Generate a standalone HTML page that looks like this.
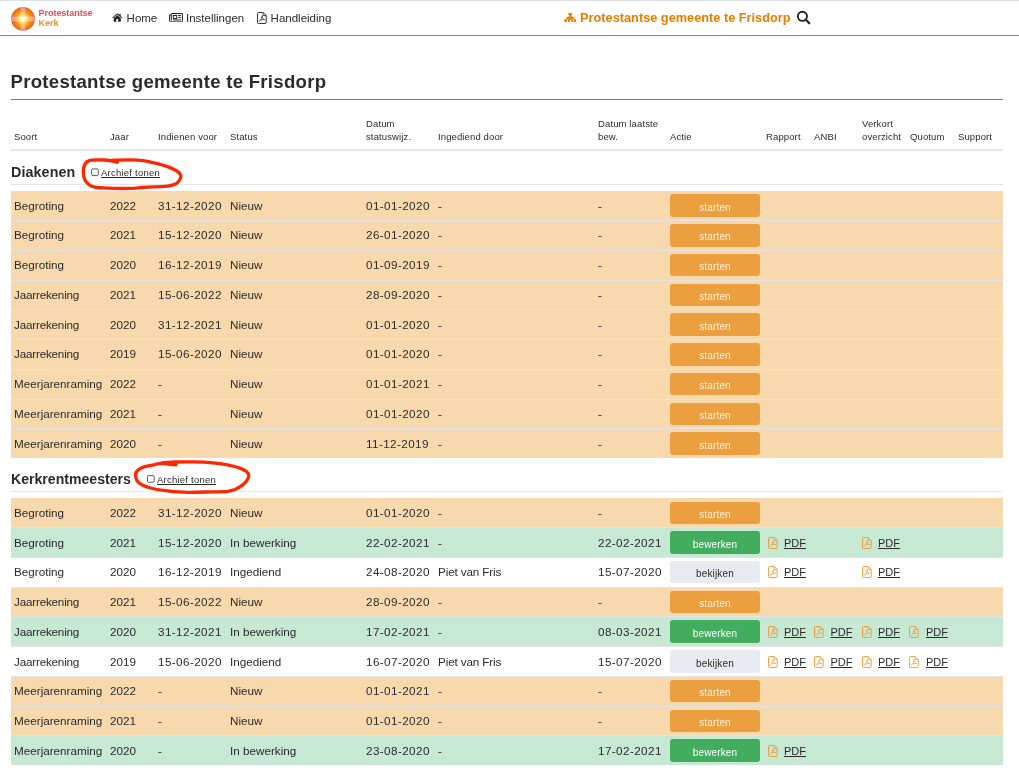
<!DOCTYPE html>
<html lang="nl">
<head>
<meta charset="utf-8">
<title>Protestantse gemeente te Frisdorp</title>
<style>
html,body{margin:0;padding:0;background:#fff;}
body{width:1019px;height:780px;overflow:hidden;position:relative;font-family:"Liberation Sans",sans-serif;color:#2b2b2b;font-size:11.7px;}
*{box-sizing:border-box;}
#wrap{position:absolute;left:0;top:0;width:1019px;height:780px;will-change:transform;}
.abs{position:absolute;}
#topline{left:0;top:0;width:1019px;height:1px;background:#dcdfe6;}
#navline{left:0;top:34.5px;width:1019px;height:1px;background:#8a8a8a;}
.nav{top:11px;height:14px;line-height:14px;font-size:11.5px;color:#2b2b2b;white-space:nowrap;}
.nav svg{position:absolute;}
#logotxt{left:39px;top:9px;transform:translate(-0.4px,-0.6px);font-weight:700;font-size:9.1px;line-height:10px;letter-spacing:-0.1px;}
#logotxt b{display:block;color:#e0505c;}
#logotxt b+b{color:#f0922c;}
#org{left:580.1px;top:10px;height:16px;line-height:16px;font-size:12.75px;font-weight:700;color:#e67e00;white-space:nowrap;}
h1{position:absolute;left:10.5px;top:70.3px;margin:0;font-size:18.6px;line-height:24px;font-weight:700;color:#2b2b2b;white-space:nowrap;letter-spacing:0.27px;}
#h1line{left:11px;top:98.5px;width:992px;height:1px;background:#7a7a7a;}
.th{font-size:9.5px;line-height:13px;color:#2b2b2b;white-space:nowrap;letter-spacing:.12px;}
#thline{left:11px;top:149.2px;width:992px;height:1.7px;background:#e3e6ec;}
.sec{left:11px;font-size:14.3px;font-weight:700;line-height:18px;white-space:nowrap;color:#2b2b2b;}
.secline{left:11px;width:992px;height:1px;background:#e3e6ec;}
.cb{width:7.5px;height:7.5px;border:1px solid #555;border-radius:2px;background:#fff;}
.arch{font-size:9.5px;letter-spacing:.23px;line-height:12px;text-decoration:underline;color:#2b2b2b;white-space:nowrap;}
.row{position:absolute;left:11px;width:992px;}
.ro{background:#f8d9ae;}
.rg{background:#c7e8d2;}
.rw{background:#ffffff;}
.sep{position:absolute;left:0;top:-0.5px;width:100%;height:1px;background:#e5e4e9;}
.c{position:absolute;height:14px;line-height:14px;white-space:nowrap;font-size:11.7px;}
.btn{position:absolute;left:659px;top:3px;width:90px;height:23px;border-radius:3px;font-size:10px;letter-spacing:.15px;text-align:center;}
.btn span{position:absolute;left:0;width:100%;height:14px;line-height:14px;}
.bo{background:#eb9f3f;color:#fdf0dc;}
.bg{background:#42ad5f;color:#fff;}
.bk{background:#e8ebef;color:#2b2b2b;}
.pdf{position:absolute;height:14px;line-height:14px;white-space:nowrap;font-size:11px;color:#ee9a36;}
.pdf .pi{position:absolute;left:0.5px;top:0.9px;}
.pdf u{position:absolute;left:17px;color:#2b2b2b;text-decoration:underline;}
</style>
</head>
<body>
<div id="wrap">
<div id="topline" class="abs"></div>

<!-- logo -->
<svg class="abs" style="left:10px;top:6px" width="26" height="26" viewBox="0 0 26 26">
  <defs>
    <radialGradient id="lg" cx="50%" cy="50%" r="50%">
      <stop offset="0" stop-color="#fff8cc"/>
      <stop offset="0.2" stop-color="#fee067"/>
      <stop offset="0.42" stop-color="#f9b81c"/>
      <stop offset="0.7" stop-color="#ef8d14"/>
      <stop offset="0.9" stop-color="#e8741a"/>
      <stop offset="1" stop-color="#e2602c"/>
    </radialGradient>
    <linearGradient id="ch" x1="0" x2="1" y1="0" y2="0">
      <stop offset="0" stop-color="#eb9bb4"/><stop offset="0.3" stop-color="#fad0a4"/><stop offset="0.5" stop-color="#fff6c4"/><stop offset="0.7" stop-color="#fad0a4"/><stop offset="1" stop-color="#eb9bb4"/>
    </linearGradient>
    <linearGradient id="cv" x1="0" x2="0" y1="0" y2="1">
      <stop offset="0" stop-color="#eb9bb4"/><stop offset="0.3" stop-color="#fad0a4"/><stop offset="0.5" stop-color="#fff6c4"/><stop offset="0.7" stop-color="#fad0a4"/><stop offset="1" stop-color="#eb9bb4"/>
    </linearGradient>
    <radialGradient id="glow" cx="50%" cy="50%" r="50%">
      <stop offset="0" stop-color="#fffbe0" stop-opacity="1"/>
      <stop offset="0.5" stop-color="#ffe98a" stop-opacity="0.75"/>
      <stop offset="1" stop-color="#ffd24a" stop-opacity="0"/>
    </radialGradient>
    <clipPath id="lc"><circle cx="13" cy="12.9" r="11.8"/></clipPath>
  </defs>
  <circle cx="13" cy="12.9" r="11.9" fill="url(#lg)"/>
  <g clip-path="url(#lc)">
    <rect x="10.7" y="1" width="4.6" height="23.8" fill="url(#cv)" opacity="0.75"/>
    <rect x="1.1" y="10.6" width="23.8" height="4.6" fill="url(#ch)" opacity="0.75"/>
    <circle cx="13" cy="12.9" r="6.6" fill="url(#glow)"/>
  </g>
  <path d="M8.2 10.9 C9.8 10.6 11.6 11 13 12.2 C14.4 11 16.2 10.6 17.8 10.9 C16.6 11.9 15.2 12.8 14.3 13.8 C14 14.8 13.6 15.8 13 16.6 C12.4 15.8 12 14.8 11.7 13.8 C10.8 12.8 9.4 11.9 8.2 10.9 Z" fill="#fffef4"/>
  <g fill="#dd4a3a" opacity="0.55">
    <circle cx="7.1" cy="3.4" r="0.45"/><circle cx="4.4" cy="5.6" r="0.45"/><circle cx="2.6" cy="8.5" r="0.45"/>
    <circle cx="18.9" cy="3.4" r="0.45"/><circle cx="21.6" cy="5.6" r="0.45"/><circle cx="23.4" cy="8.5" r="0.45"/>
    <circle cx="7.1" cy="22.4" r="0.45"/><circle cx="4.4" cy="20.2" r="0.45"/><circle cx="2.6" cy="17.3" r="0.45"/>
    <circle cx="18.9" cy="22.4" r="0.45"/><circle cx="21.6" cy="20.2" r="0.45"/><circle cx="23.4" cy="17.3" r="0.45"/>
  </g>
</svg>
<div id="logotxt" class="abs"><b>Protestantse</b><b>Kerk</b></div>

<!-- nav -->
<div class="abs nav" style="left:112px">
  <svg style="left:0.2px;top:2px" width="10.5" height="9" viewBox="0 0 21 18"><path d="M10.5 0.6 L0.4 9.2 L1.6 10.6 L10.5 3.2 L19.4 10.6 L20.6 9.2 L17.4 6.4 V1.4 H14.8 V4.2 Z" fill="#222"/><path d="M10.5 4.6 L3.4 10.5 V17.4 H8.6 V12.2 H12.4 V17.4 H17.6 V10.5 Z" fill="#222"/></svg>
  <span class="abs" style="left:14.6px;top:0">Home</span>
</div>
<div class="abs nav" style="left:169px">
  <svg style="left:0.3px;top:1.8px" width="14" height="9.4" viewBox="0 0 28 19"><path d="M4.5 1 H27 V16 Q27 18 25 18 H3 Q1 18 1 16 V4 H4.5" fill="none" stroke="#222" stroke-width="2"/><path d="M4.5 1 V15.5" stroke="#222" stroke-width="2" fill="none"/><rect x="8.5" y="5" width="7" height="6" fill="none" stroke="#222" stroke-width="2"/><path d="M18.5 5 H24 M18.5 9 H24 M8 14 H24" stroke="#222" stroke-width="2" fill="none"/></svg>
  <span class="abs" style="left:17px;top:0">Instellingen</span>
</div>
<div class="abs nav" style="left:257px">
  <span class="abs" style="left:0;top:1px;color:#222;line-height:0"><svg class="pi" viewBox="0 0 10 12" width="10" height="12"><path d="M0.55 1.3 Q0.55 0.55 1.3 0.55 H6.3 L9.2 3.45 V10.7 Q9.2 11.45 8.45 11.45 H1.3 Q0.55 11.45 0.55 10.7 Z" fill="none" stroke="currentColor" stroke-width="0.95"/><path d="M6.2 0.8 V3.6 H9" fill="none" stroke="currentColor" stroke-width="0.8"/><path d="M2 9.4 C3.4 8.6 4.5 6.6 4.9 4.4 C5.1 3.3 5.7 3.5 5.5 4.5 C5.2 6 6 7.2 7.6 7.6 M3.4 8.3 C4.6 7.6 6.2 7.3 7.6 7.4" fill="none" stroke="currentColor" stroke-width="0.75"/></svg></span>
  <span class="abs" style="left:13.6px;top:0">Handleiding</span>
</div>

<!-- organisation -->
<svg class="abs" style="left:563.8px;top:12.85px" width="12.6" height="9.6" viewBox="0 0 12.6 9.6">
  <g fill="#e67e00">
    <rect x="4.3" y="0" width="3.8" height="2.1" rx="0.7"/>
    <rect x="5.2" y="1.8" width="2.2" height="2"/>
    <path d="M4.2 3.4 H8.6 Q10.2 4 11.2 6.5 H1.4 Q2.4 4 4.2 3.4 Z" opacity="0.92"/>
    <rect x="0.25" y="6.2" width="2.7" height="2.9" rx="0.4"/>
    <path d="M4 6.2 H9.3 V9.1 H7.4 V7 H5.9 V9.1 H4 Z"/>
    <rect x="10" y="6.2" width="2.35" height="2.9" rx="0.4"/>
  </g>
</svg>
<div id="org" class="abs">Protestantse gemeente te Frisdorp</div>
<svg class="abs" style="left:795px;top:9px" width="16" height="16" viewBox="0 0 16 16"><circle cx="7.4" cy="7.3" r="4.6" fill="none" stroke="#222" stroke-width="1.9"/><path d="M10.8 10.8 L14.3 14.3" stroke="#222" stroke-width="2.1" stroke-linecap="round"/></svg>
<div id="navline" class="abs"></div>

<h1>Protestantse gemeente te Frisdorp</h1>
<div id="h1line" class="abs"></div>

<!-- table header -->
<div class="abs th" style="left:14px;top:129.5px">Soort</div>
<div class="abs th" style="left:110px;top:129.5px">Jaar</div>
<div class="abs th" style="left:158px;top:129.5px">Indienen voor</div>
<div class="abs th" style="left:230px;top:129.5px">Status</div>
<div class="abs th" style="left:366px;top:116.5px">Datum<br>statuswijz.</div>
<div class="abs th" style="left:438px;top:129.5px">Ingediend door</div>
<div class="abs th" style="left:598px;top:116.5px">Datum laatste<br>bew.</div>
<div class="abs th" style="left:670px;top:129.5px">Actie</div>
<div class="abs th" style="left:766px;top:129.5px">Rapport</div>
<div class="abs th" style="left:814px;top:129.5px">ANBI</div>
<div class="abs th" style="left:862px;top:116.5px">Verkort<br>overzicht</div>
<div class="abs th" style="left:910px;top:129.5px">Quotum</div>
<div class="abs th" style="left:958px;top:129.5px">Support</div>
<div id="thline" class="abs"></div>

<!-- Diakenen -->
<div class="abs sec" style="top:163.4px;letter-spacing:.1px">Diakenen</div>
<svg class="abs" style="left:90px;top:167px" width="10" height="10" viewBox="0 0 10 10"><rect x="1.6" y="1.9" width="6.7" height="6.7" rx="1.2" fill="#fff" stroke="#4a4a4a" stroke-width="0.9"/></svg>
<div class="abs arch" style="left:101px;top:166.5px">Archief tonen</div>
<div class="abs secline" style="top:184px"></div>
<div class="row ro" style="top:191.00px;height:29.50px">
<span class="c" style="left:3px;top:8.00px">Begroting</span>
<span class="c" style="left:99px;top:8.00px">2022</span>
<span class="c" style="left:147px;top:8.00px;letter-spacing:.4px">31-12-2020</span>
<span class="c" style="left:219px;top:8.00px">Nieuw</span>
<span class="c" style="left:355px;top:8.00px;letter-spacing:.4px">01-01-2020</span>
<span class="c" style="left:427px;top:8.00px">-</span>
<span class="c" style="left:587px;top:8.00px">-</span>
<a class="btn bo" style="top:3.00px;height:22.80px"><span style="top:6.60px">starten</span></a>
</div>
<div class="row ro" style="top:220.50px;height:29.90px">
<i class="sep"></i>
<span class="c" style="left:3px;top:7.50px">Begroting</span>
<span class="c" style="left:99px;top:7.50px">2021</span>
<span class="c" style="left:147px;top:7.50px;letter-spacing:.4px">15-12-2020</span>
<span class="c" style="left:219px;top:7.50px">Nieuw</span>
<span class="c" style="left:355px;top:7.50px;letter-spacing:.4px">26-01-2020</span>
<span class="c" style="left:427px;top:7.50px">-</span>
<span class="c" style="left:587px;top:7.50px">-</span>
<a class="btn bo" style="top:3.50px;height:22.90px"><span style="top:5.60px">starten</span></a>
</div>
<div class="row ro" style="top:250.40px;height:29.80px">
<i class="sep"></i>
<span class="c" style="left:3px;top:7.60px">Begroting</span>
<span class="c" style="left:99px;top:7.60px">2020</span>
<span class="c" style="left:147px;top:7.60px;letter-spacing:.4px">16-12-2019</span>
<span class="c" style="left:219px;top:7.60px">Nieuw</span>
<span class="c" style="left:355px;top:7.60px;letter-spacing:.4px">01-09-2019</span>
<span class="c" style="left:427px;top:7.60px">-</span>
<span class="c" style="left:587px;top:7.60px">-</span>
<a class="btn bo" style="top:3.70px;height:21.60px"><span style="top:5.50px">starten</span></a>
</div>
<div class="row ro" style="top:280.20px;height:29.30px">
<i class="sep"></i>
<span class="c" style="left:3px;top:7.80px;letter-spacing:-.2px">Jaarrekening</span>
<span class="c" style="left:99px;top:7.80px">2021</span>
<span class="c" style="left:147px;top:7.80px;letter-spacing:.4px">15-06-2022</span>
<span class="c" style="left:219px;top:7.80px">Nieuw</span>
<span class="c" style="left:355px;top:7.80px;letter-spacing:.4px">28-09-2020</span>
<span class="c" style="left:427px;top:7.80px">-</span>
<span class="c" style="left:587px;top:7.80px">-</span>
<a class="btn bo" style="top:3.90px;height:21.50px"><span style="top:5.50px">starten</span></a>
</div>
<div class="row ro" style="top:309.50px;height:29.80px">
<i class="sep"></i>
<span class="c" style="left:3px;top:8.50px;letter-spacing:-.2px">Jaarrekening</span>
<span class="c" style="left:99px;top:8.50px">2020</span>
<span class="c" style="left:147px;top:8.50px;letter-spacing:.4px">31-12-2021</span>
<span class="c" style="left:219px;top:8.50px">Nieuw</span>
<span class="c" style="left:355px;top:8.50px;letter-spacing:.4px">01-01-2020</span>
<span class="c" style="left:427px;top:8.50px">-</span>
<span class="c" style="left:587px;top:8.50px">-</span>
<a class="btn bo" style="top:3.50px;height:22.80px"><span style="top:6.60px">starten</span></a>
</div>
<div class="row ro" style="top:339.30px;height:30.00px">
<i class="sep"></i>
<span class="c" style="left:3px;top:7.70px;letter-spacing:-.2px">Jaarrekening</span>
<span class="c" style="left:99px;top:7.70px">2019</span>
<span class="c" style="left:147px;top:7.70px;letter-spacing:.4px">15-06-2020</span>
<span class="c" style="left:219px;top:7.70px">Nieuw</span>
<span class="c" style="left:355px;top:7.70px;letter-spacing:.4px">01-01-2020</span>
<span class="c" style="left:427px;top:7.70px">-</span>
<span class="c" style="left:587px;top:7.70px">-</span>
<a class="btn bo" style="top:3.70px;height:22.90px"><span style="top:5.60px">starten</span></a>
</div>
<div class="row ro" style="top:369.30px;height:29.80px">
<i class="sep"></i>
<span class="c" style="left:3px;top:7.70px">Meerjarenraming</span>
<span class="c" style="left:99px;top:7.70px">2022</span>
<span class="c" style="left:147px;top:7.70px">-</span>
<span class="c" style="left:219px;top:7.70px">Nieuw</span>
<span class="c" style="left:355px;top:7.70px;letter-spacing:.4px">01-01-2021</span>
<span class="c" style="left:427px;top:7.70px">-</span>
<span class="c" style="left:587px;top:7.70px">-</span>
<a class="btn bo" style="top:3.80px;height:21.60px"><span style="top:5.50px">starten</span></a>
</div>
<div class="row ro" style="top:399.10px;height:29.70px">
<i class="sep"></i>
<span class="c" style="left:3px;top:7.90px">Meerjarenraming</span>
<span class="c" style="left:99px;top:7.90px">2021</span>
<span class="c" style="left:147px;top:7.90px">-</span>
<span class="c" style="left:219px;top:7.90px">Nieuw</span>
<span class="c" style="left:355px;top:7.90px;letter-spacing:.4px">01-01-2020</span>
<span class="c" style="left:427px;top:7.90px">-</span>
<span class="c" style="left:587px;top:7.90px">-</span>
<a class="btn bo" style="top:4.00px;height:21.50px"><span style="top:5.50px">starten</span></a>
</div>
<div class="row ro" style="top:428.80px;height:29.20px">
<i class="sep"></i>
<span class="c" style="left:3px;top:8.20px">Meerjarenraming</span>
<span class="c" style="left:99px;top:8.20px">2020</span>
<span class="c" style="left:147px;top:8.20px">-</span>
<span class="c" style="left:219px;top:8.20px">Nieuw</span>
<span class="c" style="left:355px;top:8.20px;letter-spacing:.4px">11-12-2019</span>
<span class="c" style="left:427px;top:8.20px">-</span>
<span class="c" style="left:587px;top:8.20px">-</span>
<a class="btn bo" style="top:3.40px;height:22.40px"><span style="top:6.40px">starten</span></a>
</div>

<!-- Kerkrentmeesters -->
<div class="abs sec" style="top:470px;font-size:14.1px">Kerkrentmeesters</div>
<svg class="abs" style="left:146px;top:474px" width="10" height="10" viewBox="0 0 10 10"><rect x="1.5" y="1.6" width="6.7" height="6.7" rx="1.2" fill="#fff" stroke="#4a4a4a" stroke-width="0.9"/></svg>
<div class="abs arch" style="left:157px;top:473.5px">Archief tonen</div>
<div class="abs secline" style="top:491px"></div>
<div class="row ro" style="top:498.00px;height:29.50px">
<span class="c" style="left:3px;top:8.00px">Begroting</span>
<span class="c" style="left:99px;top:8.00px">2022</span>
<span class="c" style="left:147px;top:8.00px;letter-spacing:.4px">31-12-2020</span>
<span class="c" style="left:219px;top:8.00px">Nieuw</span>
<span class="c" style="left:355px;top:8.00px;letter-spacing:.4px">01-01-2020</span>
<span class="c" style="left:427px;top:8.00px">-</span>
<span class="c" style="left:587px;top:8.00px">-</span>
<a class="btn bo" style="top:3.90px;height:22.10px"><span style="top:5.70px">starten</span></a>
</div>
<div class="row rg" style="top:527.50px;height:29.90px">
<i class="sep"></i>
<span class="c" style="left:3px;top:8.50px">Begroting</span>
<span class="c" style="left:99px;top:8.50px">2021</span>
<span class="c" style="left:147px;top:8.50px;letter-spacing:.4px">15-12-2020</span>
<span class="c" style="left:219px;top:8.50px">In bewerking</span>
<span class="c" style="left:355px;top:8.50px;letter-spacing:.4px">22-02-2021</span>
<span class="c" style="left:427px;top:8.50px">-</span>
<span class="c" style="left:587px;top:8.50px;letter-spacing:.4px">22-02-2021</span>
<a class="btn bg" style="top:3.50px;height:22.90px"><span style="top:6.60px">bewerken</span></a>
<span class="pdf" style="left:756px;top:8.50px"><svg class="pi" viewBox="0 0 10 12" width="10" height="12"><path d="M0.55 1.3 Q0.55 0.55 1.3 0.55 H6.3 L9.2 3.45 V10.7 Q9.2 11.45 8.45 11.45 H1.3 Q0.55 11.45 0.55 10.7 Z" fill="none" stroke="currentColor" stroke-width="0.95"/><path d="M6.2 0.8 V3.6 H9" fill="none" stroke="currentColor" stroke-width="0.8"/><path d="M2 9.4 C3.4 8.6 4.5 6.6 4.9 4.4 C5.1 3.3 5.7 3.5 5.5 4.5 C5.2 6 6 7.2 7.6 7.6 M3.4 8.3 C4.6 7.6 6.2 7.3 7.6 7.4" fill="none" stroke="currentColor" stroke-width="0.75"/></svg><u>PDF</u></span>
<span class="pdf" style="left:850px;top:8.50px"><svg class="pi" viewBox="0 0 10 12" width="10" height="12"><path d="M0.55 1.3 Q0.55 0.55 1.3 0.55 H6.3 L9.2 3.45 V10.7 Q9.2 11.45 8.45 11.45 H1.3 Q0.55 11.45 0.55 10.7 Z" fill="none" stroke="currentColor" stroke-width="0.95"/><path d="M6.2 0.8 V3.6 H9" fill="none" stroke="currentColor" stroke-width="0.8"/><path d="M2 9.4 C3.4 8.6 4.5 6.6 4.9 4.4 C5.1 3.3 5.7 3.5 5.5 4.5 C5.2 6 6 7.2 7.6 7.6 M3.4 8.3 C4.6 7.6 6.2 7.3 7.6 7.4" fill="none" stroke="currentColor" stroke-width="0.75"/></svg><u>PDF</u></span>
</div>
<div class="row rw" style="top:557.40px;height:29.80px">
<i class="sep"></i>
<span class="c" style="left:3px;top:7.60px">Begroting</span>
<span class="c" style="left:99px;top:7.60px">2020</span>
<span class="c" style="left:147px;top:7.60px;letter-spacing:.4px">16-12-2019</span>
<span class="c" style="left:219px;top:7.60px">Ingediend</span>
<span class="c" style="left:355px;top:7.60px;letter-spacing:.4px">24-08-2020</span>
<span class="c" style="left:427px;top:7.60px;letter-spacing:-.13px">Piet van Fris</span>
<span class="c" style="left:587px;top:7.60px;letter-spacing:.4px">15-07-2020</span>
<a class="btn bk" style="top:3.70px;height:21.60px"><span style="top:5.50px">bekijken</span></a>
<span class="pdf" style="left:756px;top:7.60px"><svg class="pi" viewBox="0 0 10 12" width="10" height="12"><path d="M0.55 1.3 Q0.55 0.55 1.3 0.55 H6.3 L9.2 3.45 V10.7 Q9.2 11.45 8.45 11.45 H1.3 Q0.55 11.45 0.55 10.7 Z" fill="none" stroke="currentColor" stroke-width="0.95"/><path d="M6.2 0.8 V3.6 H9" fill="none" stroke="currentColor" stroke-width="0.8"/><path d="M2 9.4 C3.4 8.6 4.5 6.6 4.9 4.4 C5.1 3.3 5.7 3.5 5.5 4.5 C5.2 6 6 7.2 7.6 7.6 M3.4 8.3 C4.6 7.6 6.2 7.3 7.6 7.4" fill="none" stroke="currentColor" stroke-width="0.75"/></svg><u>PDF</u></span>
<span class="pdf" style="left:850px;top:7.60px"><svg class="pi" viewBox="0 0 10 12" width="10" height="12"><path d="M0.55 1.3 Q0.55 0.55 1.3 0.55 H6.3 L9.2 3.45 V10.7 Q9.2 11.45 8.45 11.45 H1.3 Q0.55 11.45 0.55 10.7 Z" fill="none" stroke="currentColor" stroke-width="0.95"/><path d="M6.2 0.8 V3.6 H9" fill="none" stroke="currentColor" stroke-width="0.8"/><path d="M2 9.4 C3.4 8.6 4.5 6.6 4.9 4.4 C5.1 3.3 5.7 3.5 5.5 4.5 C5.2 6 6 7.2 7.6 7.6 M3.4 8.3 C4.6 7.6 6.2 7.3 7.6 7.4" fill="none" stroke="currentColor" stroke-width="0.75"/></svg><u>PDF</u></span>
</div>
<div class="row ro" style="top:587.20px;height:29.30px">
<i class="sep"></i>
<span class="c" style="left:3px;top:7.80px;letter-spacing:-.2px">Jaarrekening</span>
<span class="c" style="left:99px;top:7.80px">2021</span>
<span class="c" style="left:147px;top:7.80px;letter-spacing:.4px">15-06-2022</span>
<span class="c" style="left:219px;top:7.80px">Nieuw</span>
<span class="c" style="left:355px;top:7.80px;letter-spacing:.4px">28-09-2020</span>
<span class="c" style="left:427px;top:7.80px">-</span>
<span class="c" style="left:587px;top:7.80px">-</span>
<a class="btn bo" style="top:3.90px;height:21.50px"><span style="top:5.50px">starten</span></a>
</div>
<div class="row rg" style="top:616.50px;height:29.80px">
<i class="sep"></i>
<span class="c" style="left:3px;top:8.50px;letter-spacing:-.2px">Jaarrekening</span>
<span class="c" style="left:99px;top:8.50px">2020</span>
<span class="c" style="left:147px;top:8.50px;letter-spacing:.4px">31-12-2021</span>
<span class="c" style="left:219px;top:8.50px">In bewerking</span>
<span class="c" style="left:355px;top:8.50px;letter-spacing:.4px">17-02-2021</span>
<span class="c" style="left:427px;top:8.50px">-</span>
<span class="c" style="left:587px;top:8.50px;letter-spacing:.4px">08-03-2021</span>
<a class="btn bg" style="top:3.50px;height:22.80px"><span style="top:6.60px">bewerken</span></a>
<span class="pdf" style="left:756px;top:8.50px"><svg class="pi" viewBox="0 0 10 12" width="10" height="12"><path d="M0.55 1.3 Q0.55 0.55 1.3 0.55 H6.3 L9.2 3.45 V10.7 Q9.2 11.45 8.45 11.45 H1.3 Q0.55 11.45 0.55 10.7 Z" fill="none" stroke="currentColor" stroke-width="0.95"/><path d="M6.2 0.8 V3.6 H9" fill="none" stroke="currentColor" stroke-width="0.8"/><path d="M2 9.4 C3.4 8.6 4.5 6.6 4.9 4.4 C5.1 3.3 5.7 3.5 5.5 4.5 C5.2 6 6 7.2 7.6 7.6 M3.4 8.3 C4.6 7.6 6.2 7.3 7.6 7.4" fill="none" stroke="currentColor" stroke-width="0.75"/></svg><u>PDF</u></span>
<span class="pdf" style="left:802.4px;top:8.50px"><svg class="pi" viewBox="0 0 10 12" width="10" height="12"><path d="M0.55 1.3 Q0.55 0.55 1.3 0.55 H6.3 L9.2 3.45 V10.7 Q9.2 11.45 8.45 11.45 H1.3 Q0.55 11.45 0.55 10.7 Z" fill="none" stroke="currentColor" stroke-width="0.95"/><path d="M6.2 0.8 V3.6 H9" fill="none" stroke="currentColor" stroke-width="0.8"/><path d="M2 9.4 C3.4 8.6 4.5 6.6 4.9 4.4 C5.1 3.3 5.7 3.5 5.5 4.5 C5.2 6 6 7.2 7.6 7.6 M3.4 8.3 C4.6 7.6 6.2 7.3 7.6 7.4" fill="none" stroke="currentColor" stroke-width="0.75"/></svg><u>PDF</u></span>
<span class="pdf" style="left:850px;top:8.50px"><svg class="pi" viewBox="0 0 10 12" width="10" height="12"><path d="M0.55 1.3 Q0.55 0.55 1.3 0.55 H6.3 L9.2 3.45 V10.7 Q9.2 11.45 8.45 11.45 H1.3 Q0.55 11.45 0.55 10.7 Z" fill="none" stroke="currentColor" stroke-width="0.95"/><path d="M6.2 0.8 V3.6 H9" fill="none" stroke="currentColor" stroke-width="0.8"/><path d="M2 9.4 C3.4 8.6 4.5 6.6 4.9 4.4 C5.1 3.3 5.7 3.5 5.5 4.5 C5.2 6 6 7.2 7.6 7.6 M3.4 8.3 C4.6 7.6 6.2 7.3 7.6 7.4" fill="none" stroke="currentColor" stroke-width="0.75"/></svg><u>PDF</u></span>
<span class="pdf" style="left:897.9px;top:8.50px"><svg class="pi" viewBox="0 0 10 12" width="10" height="12"><path d="M0.55 1.3 Q0.55 0.55 1.3 0.55 H6.3 L9.2 3.45 V10.7 Q9.2 11.45 8.45 11.45 H1.3 Q0.55 11.45 0.55 10.7 Z" fill="none" stroke="currentColor" stroke-width="0.95"/><path d="M6.2 0.8 V3.6 H9" fill="none" stroke="currentColor" stroke-width="0.8"/><path d="M2 9.4 C3.4 8.6 4.5 6.6 4.9 4.4 C5.1 3.3 5.7 3.5 5.5 4.5 C5.2 6 6 7.2 7.6 7.6 M3.4 8.3 C4.6 7.6 6.2 7.3 7.6 7.4" fill="none" stroke="currentColor" stroke-width="0.75"/></svg><u>PDF</u></span>
</div>
<div class="row rw" style="top:646.30px;height:30.00px">
<i class="sep"></i>
<span class="c" style="left:3px;top:8.70px;letter-spacing:-.2px">Jaarrekening</span>
<span class="c" style="left:99px;top:8.70px">2019</span>
<span class="c" style="left:147px;top:8.70px;letter-spacing:.4px">15-06-2020</span>
<span class="c" style="left:219px;top:8.70px">Ingediend</span>
<span class="c" style="left:355px;top:8.70px;letter-spacing:.4px">16-07-2020</span>
<span class="c" style="left:427px;top:8.70px;letter-spacing:-.13px">Piet van Fris</span>
<span class="c" style="left:587px;top:8.70px;letter-spacing:.4px">15-07-2020</span>
<a class="btn bk" style="top:3.70px;height:22.90px"><span style="top:6.60px">bekijken</span></a>
<span class="pdf" style="left:756px;top:8.70px"><svg class="pi" viewBox="0 0 10 12" width="10" height="12"><path d="M0.55 1.3 Q0.55 0.55 1.3 0.55 H6.3 L9.2 3.45 V10.7 Q9.2 11.45 8.45 11.45 H1.3 Q0.55 11.45 0.55 10.7 Z" fill="none" stroke="currentColor" stroke-width="0.95"/><path d="M6.2 0.8 V3.6 H9" fill="none" stroke="currentColor" stroke-width="0.8"/><path d="M2 9.4 C3.4 8.6 4.5 6.6 4.9 4.4 C5.1 3.3 5.7 3.5 5.5 4.5 C5.2 6 6 7.2 7.6 7.6 M3.4 8.3 C4.6 7.6 6.2 7.3 7.6 7.4" fill="none" stroke="currentColor" stroke-width="0.75"/></svg><u>PDF</u></span>
<span class="pdf" style="left:802.4px;top:8.70px"><svg class="pi" viewBox="0 0 10 12" width="10" height="12"><path d="M0.55 1.3 Q0.55 0.55 1.3 0.55 H6.3 L9.2 3.45 V10.7 Q9.2 11.45 8.45 11.45 H1.3 Q0.55 11.45 0.55 10.7 Z" fill="none" stroke="currentColor" stroke-width="0.95"/><path d="M6.2 0.8 V3.6 H9" fill="none" stroke="currentColor" stroke-width="0.8"/><path d="M2 9.4 C3.4 8.6 4.5 6.6 4.9 4.4 C5.1 3.3 5.7 3.5 5.5 4.5 C5.2 6 6 7.2 7.6 7.6 M3.4 8.3 C4.6 7.6 6.2 7.3 7.6 7.4" fill="none" stroke="currentColor" stroke-width="0.75"/></svg><u>PDF</u></span>
<span class="pdf" style="left:850px;top:8.70px"><svg class="pi" viewBox="0 0 10 12" width="10" height="12"><path d="M0.55 1.3 Q0.55 0.55 1.3 0.55 H6.3 L9.2 3.45 V10.7 Q9.2 11.45 8.45 11.45 H1.3 Q0.55 11.45 0.55 10.7 Z" fill="none" stroke="currentColor" stroke-width="0.95"/><path d="M6.2 0.8 V3.6 H9" fill="none" stroke="currentColor" stroke-width="0.8"/><path d="M2 9.4 C3.4 8.6 4.5 6.6 4.9 4.4 C5.1 3.3 5.7 3.5 5.5 4.5 C5.2 6 6 7.2 7.6 7.6 M3.4 8.3 C4.6 7.6 6.2 7.3 7.6 7.4" fill="none" stroke="currentColor" stroke-width="0.75"/></svg><u>PDF</u></span>
<span class="pdf" style="left:897.9px;top:8.70px"><svg class="pi" viewBox="0 0 10 12" width="10" height="12"><path d="M0.55 1.3 Q0.55 0.55 1.3 0.55 H6.3 L9.2 3.45 V10.7 Q9.2 11.45 8.45 11.45 H1.3 Q0.55 11.45 0.55 10.7 Z" fill="none" stroke="currentColor" stroke-width="0.95"/><path d="M6.2 0.8 V3.6 H9" fill="none" stroke="currentColor" stroke-width="0.8"/><path d="M2 9.4 C3.4 8.6 4.5 6.6 4.9 4.4 C5.1 3.3 5.7 3.5 5.5 4.5 C5.2 6 6 7.2 7.6 7.6 M3.4 8.3 C4.6 7.6 6.2 7.3 7.6 7.4" fill="none" stroke="currentColor" stroke-width="0.75"/></svg><u>PDF</u></span>
</div>
<div class="row ro" style="top:676.30px;height:29.80px">
<i class="sep"></i>
<span class="c" style="left:3px;top:7.70px">Meerjarenraming</span>
<span class="c" style="left:99px;top:7.70px">2022</span>
<span class="c" style="left:147px;top:7.70px">-</span>
<span class="c" style="left:219px;top:7.70px">Nieuw</span>
<span class="c" style="left:355px;top:7.70px;letter-spacing:.4px">01-01-2021</span>
<span class="c" style="left:427px;top:7.70px">-</span>
<span class="c" style="left:587px;top:7.70px">-</span>
<a class="btn bo" style="top:3.80px;height:21.60px"><span style="top:5.50px">starten</span></a>
</div>
<div class="row ro" style="top:706.10px;height:29.70px">
<i class="sep"></i>
<span class="c" style="left:3px;top:7.90px">Meerjarenraming</span>
<span class="c" style="left:99px;top:7.90px">2021</span>
<span class="c" style="left:147px;top:7.90px">-</span>
<span class="c" style="left:219px;top:7.90px">Nieuw</span>
<span class="c" style="left:355px;top:7.90px;letter-spacing:.4px">01-01-2020</span>
<span class="c" style="left:427px;top:7.90px">-</span>
<span class="c" style="left:587px;top:7.90px">-</span>
<a class="btn bo" style="top:4.00px;height:21.50px"><span style="top:5.50px">starten</span></a>
</div>
<div class="row rg" style="top:735.80px;height:29.20px">
<i class="sep"></i>
<span class="c" style="left:3px;top:8.20px">Meerjarenraming</span>
<span class="c" style="left:99px;top:8.20px">2020</span>
<span class="c" style="left:147px;top:8.20px">-</span>
<span class="c" style="left:219px;top:8.20px">In bewerking</span>
<span class="c" style="left:355px;top:8.20px;letter-spacing:.4px">23-08-2020</span>
<span class="c" style="left:427px;top:8.20px">-</span>
<span class="c" style="left:587px;top:8.20px;letter-spacing:.4px">17-02-2021</span>
<a class="btn bg" style="top:3.40px;height:22.40px"><span style="top:6.40px">bewerken</span></a>
<span class="pdf" style="left:756px;top:8.20px"><svg class="pi" viewBox="0 0 10 12" width="10" height="12"><path d="M0.55 1.3 Q0.55 0.55 1.3 0.55 H6.3 L9.2 3.45 V10.7 Q9.2 11.45 8.45 11.45 H1.3 Q0.55 11.45 0.55 10.7 Z" fill="none" stroke="currentColor" stroke-width="0.95"/><path d="M6.2 0.8 V3.6 H9" fill="none" stroke="currentColor" stroke-width="0.8"/><path d="M2 9.4 C3.4 8.6 4.5 6.6 4.9 4.4 C5.1 3.3 5.7 3.5 5.5 4.5 C5.2 6 6 7.2 7.6 7.6 M3.4 8.3 C4.6 7.6 6.2 7.3 7.6 7.4" fill="none" stroke="currentColor" stroke-width="0.75"/></svg><u>PDF</u></span>
</div>

<!-- red annotations -->
<svg class="abs" style="left:0;top:0;pointer-events:none" width="1019" height="780" viewBox="0 0 1019 780">
  <g fill="none" stroke="#ff2600" stroke-width="3.3" stroke-linecap="round" stroke-linejoin="round">
    <path d="M117.5 162.2 C114 161.4 110 160.3 104 160 C98 159.7 93 159.6 90 160.4 C85.5 161.6 83.3 166 83.3 171.6 C83.3 178 85 182.6 90 185.4 C94 187.4 99 187.8 104 187.9 C112 188.4 121 188.6 130 188.4 C134 188.2 138 187.8 141.8 187.5 C146 187.2 150 187 153.5 186.9 C157.6 186.8 161.6 186.8 165.3 186.4 C168.6 186 171.6 185.5 174.1 184.6 C176.2 183.8 177.8 182.6 178.8 181.1 C180 179.4 180.9 178 180.9 176.4 C180.9 174.4 179.2 172.6 177 171.1 C174.6 169.5 171.6 168.1 168.2 166.9 C164.6 165.6 160.6 164.4 156.5 163.4 C152.6 162.4 148.6 161.4 144.7 160.8 C140 160.1 135 159.9 130 159.9 C124 159.9 118 159.9 113 160.1"/>
    <path d="M176 464.8 C171 464.6 166 463.6 161.8 463.4 C158 463.6 156 464.3 153.5 464.8 C150 465.4 147 466 144.7 466.6 C142 467.4 140 468.5 138.8 469.5 C136.5 471 135.6 473 135.6 474.8 C135.6 477 136 479 137 480.7 C138 482.4 139.6 483.8 141.8 484.8 C144.4 486.2 147 487.2 150.6 488 C155 489.2 160 490 165.3 490.7 C171 491.5 177 492 183 492.2 C193 492.5 203 492 212.6 491.8 C218 491.7 223 491.6 227.4 491.3 C230 491 232.6 490.4 235 489.5 C237.6 488.4 240 487 242 485.4 C244 483.9 245.8 482.4 246.8 480.7 C248 478.8 248.8 477 248.8 475.4 C248.8 474 247.6 472.6 246.2 471.3 C244.4 469.8 242 468.7 239.1 467.8 C235.6 466.6 231.6 465.6 227.4 464.8 C222.6 463.9 217.6 463.2 212.6 462.8 C207 462.3 201 462 195 461.9 C188 461.8 181 461.8 176 462 C171 462.2 166 462.4 162 462.9"/>
  </g>
</svg>
</div>
</body>
</html>
